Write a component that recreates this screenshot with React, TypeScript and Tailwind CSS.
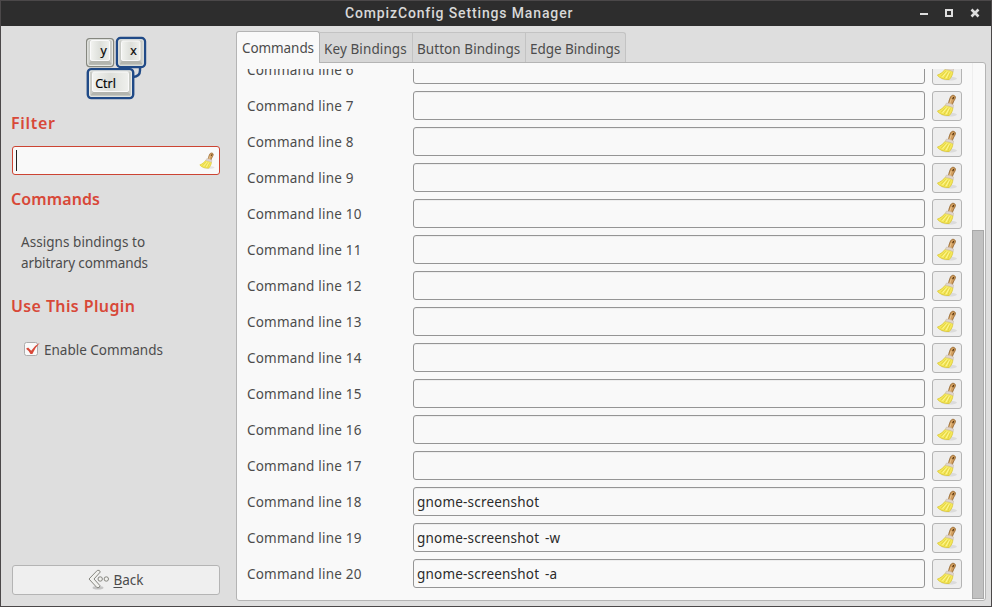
import React from "react";

const rows: { n: number; value: string }[] = Array.from({ length: 15 }, (_, i) => ({
  n: i + 6,
  value: ["gnome-screenshot", "gnome-screenshot -w", "gnome-screenshot -a"][i - 12] ?? "",
}));

function Broom({ className = "" }: { className?: string }) {
  return (
    <svg viewBox="0 0 24 24" className={className} fill="none">
      <ellipse cx="14" cy="20.6" rx="8" ry="2" fill="#000" opacity=".08" />
      <path d="M13.2 9.8C14 8 14 6.6 15 4.2 15.8 2 17 .9 18.8 1.4 20.6 2 20.7 3.5 19.8 5.3 18.8 7.2 17.9 8.4 17.3 11" fill="#d3a061" stroke="#936329" strokeWidth=".9" />
      <path d="M18.7 2.9l-1 2.3" stroke="#54330f" strokeWidth="1.2" />
      <path d="M16.2 5.2l-1.4 4" stroke="#ecc890" strokeWidth="1" />
      <path d="M10.7 10.8C8.6 13.6 5.6 16 2.4 17.2c2 2.8 6.2 4.4 11.8 4.4 2.2-2.4 3.7-5.2 3.7-8.4z" fill="#f4e85a" stroke="#dac52f" strokeWidth=".8" />
      <path d="M11 13.2 5.8 18.4M13.2 13.8 9.2 20M15.3 14.4l-2.4 6.6" stroke="#dfcd38" strokeWidth=".8" />
      <path d="M12 13.4 7.5 18.8M14.4 14.2l-3.4 6" stroke="#fff9a4" strokeWidth=".8" />
      <path d="M11.3 9.1q3.8 0 7.3 1.9l-.5 2.6q-3.4-2-7.6-2z" fill="#e2d6cd" stroke="#cabdb2" strokeWidth=".6" />
    </svg>
  );
}

function KeysLogo() {
  return (
    <svg width="62" height="64" viewBox="85 36 62 64" className="block">
      <defs>
        <linearGradient id="key" x1="0" y1="0" x2="1" y2="0">
          <stop offset="0" stopColor="#f2f3f0" />
          <stop offset=".5" stopColor="#dddfda" />
          <stop offset="1" stopColor="#eff0ed" />
        </linearGradient>
      </defs>
      <path d="M140 68v2.5q0 6-7 6.5" fill="none" stroke="#204a87" strokeWidth="2.4" />
      <rect x="86.6" y="38.6" width="27" height="28" rx="3" fill="#c9cbc6" stroke="#85877f" strokeWidth="1.2" />
      <path d="M88 65l3-4.5h18l3.5 4.5z" fill="#b3b5af" />
      <rect x="87.8" y="39.8" width="24.6" height="25.6" rx="2" fill="none" stroke="#eceeea" strokeWidth="1" />
      <rect x="90.5" y="40.5" width="19" height="20" rx="1.5" fill="url(#key)" stroke="#fafafa" strokeWidth="1" />
      <rect x="117" y="38" width="28" height="29" rx="3.5" fill="#c9cbc6" stroke="#204a87" strokeWidth="2.4" />
      <path d="M119 65.4l3-5h18l3 5z" fill="#b3b5af" />
      <rect x="118.8" y="39.8" width="24.4" height="25.4" rx="1.5" fill="none" stroke="#eceeea" strokeWidth="1" />
      <rect x="121.5" y="41" width="18.5" height="19.5" rx="1.5" fill="url(#key)" stroke="#fafafa" strokeWidth="1" />
      <rect x="87.8" y="69.1" width="45.4" height="29" rx="3.5" fill="#c9cbc6" stroke="#204a87" strokeWidth="2.4" />
      <path d="M90 96l3.5-4.5h34l4 4.5z" fill="#b3b5af" />
      <rect x="89.6" y="71" width="41.8" height="25.2" rx="1.5" fill="none" stroke="#eceeea" strokeWidth="1" />
      <rect x="92.5" y="72" width="36" height="19.5" rx="1.5" fill="url(#key)" stroke="#fafafa" strokeWidth="1" />
      <g fontFamily="Open Sans, Noto Sans, sans-serif" fontSize="12.5" fill="#000" stroke="#000" strokeWidth=".2">
        <text x="100.4" y="55">y</text>
        <text x="130.3" y="55">x</text>
        <text x="95.2" y="87.5">Ctrl</text>
      </g>
    </svg>
  );
}

function BackArrow() {
  return (
    <svg width="22" height="22" viewBox="0 0 22 22" className="block">
      <ellipse cx="10" cy="18.8" rx="5.5" ry="1.8" fill="#000" opacity=".18" />
      <path d="M1 10 9.3 1.4Q11.7.5 12.3 3L6 10l6 6.7q-.3 2.6-3 2z" fill="#f1f1ee" stroke="#85857f" strokeWidth="1" strokeLinejoin="round" />
      <circle cx="12.2" cy="10" r="2.2" fill="#f1f1ee" stroke="#85857f" />
      <circle cx="18.3" cy="10" r="2.2" fill="#f1f1ee" stroke="#85857f" />
    </svg>
  );
}

function Tab({ label, className }: { label: string; className: string }) {
  return (
    <div className={"flex h-[30px] items-center self-end border-t border-r border-[#c3c3c3] bg-[#d7d7d7] pt-[3px] pl-[4px] " + className}>
      {label}
    </div>
  );
}

export default function App() {
  return (
    <div className="flex h-[607px] w-[992px] flex-col overflow-hidden border border-[#4b4849] bg-[#dedede] font-['Noto_Sans','Open_Sans',sans-serif] text-[13.5px] leading-5 whitespace-nowrap text-[#4c4c4c]">
      <header className="flex h-[25px] shrink-0 items-center justify-between bg-[#2d2d2d] pr-[9px] pl-[344px]">
        <h1 className="-mt-px font-['Roboto',sans-serif] text-[14px] font-medium tracking-[0.86px] text-[#d8d8d8]">
          CompizConfig Settings Manager
        </h1>
        <svg width="64" height="14" viewBox="0 0 64 14" className="-mt-px">
          <path d="M2 7h8v2H2z" fill="#dedede" />
          <path d="M28 4h6v6h-6z" fill="none" stroke="#dedede" strokeWidth="2" />
          <path d="m53.5 3.5 7 7m0-7-7 7" stroke="#dedede" strokeWidth="2.6" />
        </svg>
      </header>
      <div className="flex min-h-0 flex-1">
        <aside className="flex w-[235px] shrink-0 flex-col pl-[11px] pr-[16px]">
          <div className="mt-[10px] ml-[73px] h-[64px]"><KeysLogo /></div>
          <h2 className="mt-[11px] -ml-px h-6 text-[16px] font-semibold leading-6 tracking-[0.7px] text-[#d84838]">Filter</h2>
          <div className="mt-[11px] flex h-[29px] items-center justify-between rounded-[3px] border border-[#cc4433] bg-[#f9f9f9] pl-[3px] pr-[3px]">
            <span className="h-[21px] w-px bg-[#222]" />
            <Broom className="size-[18px]" />
          </div>
          <h2 className="mt-[12px] -ml-px h-6 text-[16px] font-semibold leading-6 tracking-[0.1px] text-[#d84838]">Commands</h2>
          <p className="mt-[21px] pl-[9px] leading-[21px]">
            <span className="tracking-[0.05px]">Assigns bindings to</span>
            <br />
            <span className="tracking-[-0.13px]">arbitrary commands</span>
          </p>
          <h2 className="mt-[20px] -ml-px h-6 text-[16px] font-semibold leading-6 tracking-[0.38px] text-[#d84838]">Use This Plugin</h2>
          <div className="mt-[22px] ml-[12px] flex h-5 items-center">
            <svg width="18" height="16" viewBox="0 0 18 16" className="mr-[2px] -mt-[2px]">
              <rect x=".5" y="1.5" width="13" height="13" rx="2" fill="#f9f9f9" stroke="#adadad" />
              <path d="M2 7.8 4.1 6.6l3.1 3.1Q10.5 4.5 15.8 1.7 10.7 7 8.4 12.9H6.5Q5 9.8 2 7.8" fill="#d84838" />
            </svg>
            Enable Commands
          </div>
          <button className="mt-auto mb-[11px] flex h-[30px] items-center justify-center rounded-[3px] border border-[#b4b4b4] bg-[#efefef]">
            <BackArrow />
            <span className="ml-[3px]"><u className="underline-offset-2">B</u>ack</span>
          </button>
        </aside>
        <main className="mt-[5px] mb-[5px] flex w-[750px] min-w-0 flex-col">
          <nav className="z-10 -mb-px flex h-[32px]">
            <div className="flex w-[84px] items-center rounded-t-[3px] border border-b-0 border-[#b4b4b4] bg-[#f9f9f9] pl-[5px] tracking-[-0.08px]">Commands</div>
            <div className="mb-px flex">
              <Tab label="Key Bindings" className="w-[93px] tracking-[0.1px]" />
              <Tab label="Button Bindings" className="w-[113px] tracking-[0.06px]" />
              <Tab label="Edge Bindings" className="w-[100px] rounded-tr-[3px] tracking-[-0.04px]" />
            </div>
          </nav>
          <section className="flex min-h-0 flex-1 rounded-b-[3px] rounded-tr-[3px] border border-[#b4b4b4] bg-[#f9f9f9] pt-[6px]">
            <div className="h-[524px] w-[735px] overflow-hidden">
              <div className="-mt-[14px] flex flex-col gap-[6px]">
                {rows.map((r) => (
                  <div key={r.n} className="flex h-[30px] pl-[10px] tracking-[0.2px]">
                    <span className="w-[166px] shrink-0 pt-[5px]">Command line {r.n}</span>
                    <div className="h-[29px] w-[512px] shrink-0 rounded-[3px] border border-[#959595] bg-[#f9f9f9] pl-[3px] pt-[4px] text-[#2b2b2b] shadow-[inset_0_1px_0_#eeeeee] [word-spacing:2px]">
                      {r.value}
                    </div>
                    <button className="ml-[7px] flex h-[30px] w-[30px] shrink-0 items-center justify-center rounded-[3px] border border-[#b4b4b4] bg-[#eeeeee]">
                      <Broom className="size-6" />
                    </button>
                  </div>
                ))}
              </div>
            </div>
            <div className="-mt-[6px] w-[12px] border-l border-[#eeeeee] pt-[167px]">
              <div className="-ml-px h-[369px] w-[12px] border border-[#a8a8a8] bg-[#c1c1c1]" />
            </div>
          </section>
        </main>
      </div>
    </div>
  );
}
